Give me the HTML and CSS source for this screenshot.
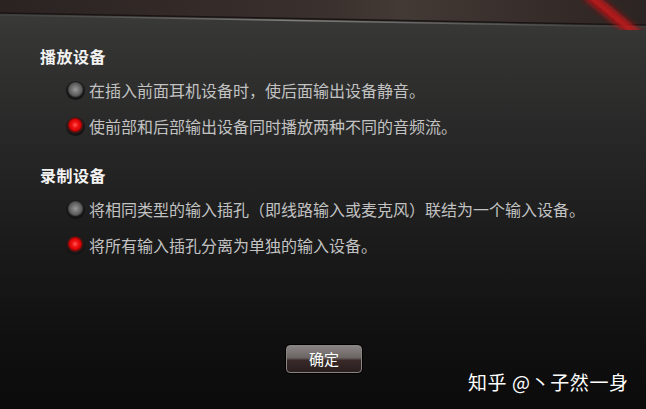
FILE: index.html
```html
<!DOCTYPE html>
<html lang="zh-CN">
<head>
  <meta charset="UTF-8">
  <meta name="viewport" content="width=device-width, initial-scale=1.0">
  <title>高级设备设置</title>
  <link rel="stylesheet" href="styles.css">
</head>
<body>
  <div class="window">
    <!-- top frame edge with the red accent stripe -->
    <svg class="frame-top" width="646" height="30" viewBox="0 0 646 30">
      <defs>
        <linearGradient id="band" x1="0" y1="0" x2="1" y2="0">
          <stop offset="0" stop-color="#2a2321"/>
          <stop offset="0.5" stop-color="#3a302d"/>
          <stop offset="0.62" stop-color="#433935"/>
          <stop offset="1" stop-color="#2c2422"/>
        </linearGradient>
        <linearGradient id="shine" x1="0" y1="0" x2="1" y2="0">
          <stop offset="0" stop-color="#5a5a58" stop-opacity="0.2"/>
          <stop offset="0.45" stop-color="#8a8884" stop-opacity="0.9"/>
          <stop offset="0.8" stop-color="#6a6866" stop-opacity="0.6"/>
          <stop offset="1" stop-color="#555" stop-opacity="0.2"/>
        </linearGradient>
        <filter id="soft"><feGaussianBlur stdDeviation="3"/></filter>
      </defs>
      <polygon points="0,0 646,0 646,25 0,13" fill="url(#band)"/>
      <line x1="0" y1="13" x2="646" y2="25" stroke="#1a1514" stroke-width="1.5"/>
      <line x1="0" y1="15" x2="646" y2="27" stroke="url(#shine)" stroke-width="1.5"/>
      <line x1="586" y1="-6" x2="652" y2="48" stroke="#b01218" stroke-width="9" filter="url(#soft)"/>
      <line x1="590" y1="-6" x2="652" y2="46" stroke="#d81c22" stroke-width="3" filter="url(#soft)"/>
    </svg>

    <div class="content">
      <section class="group">
        <h2 class="group-title">播放设备</h2>
        <label class="option">
          <span class="radio"></span>
          <span class="option-text">在插入前面耳机设备时，使后面输出设备静音。</span>
        </label>
        <label class="option">
          <span class="radio checked"></span>
          <span class="option-text">使前部和后部输出设备同时播放两种不同的音频流。</span>
        </label>
      </section>

      <section class="group">
        <h2 class="group-title">录制设备</h2>
        <label class="option">
          <span class="radio"></span>
          <span class="option-text">将相同类型的输入插孔（即线路输入或麦克风）联结为一个输入设备。</span>
        </label>
        <label class="option">
          <span class="radio checked"></span>
          <span class="option-text">将所有输入插孔分离为单独的输入设备。</span>
        </label>
      </section>

      <div class="actions">
        <button type="button" class="btn-ok">确定</button>
      </div>
    </div>

    <div class="watermark">知乎 @丶子然一身</div>
  </div>
</body>
</html>
```

FILE: styles.css
```css
body {
  margin: 0;
  padding: 0;
  background: #0c0c0c;
  font-family: "Noto Sans CJK SC", "Noto Sans", sans-serif;
}
.window {
  position: relative;
  width: 646px;
  height: 409px;
  overflow: hidden;
  background: linear-gradient(to bottom, #3d3d3b 0px, #343433 40px, #262626 150px, #1a1a1a 250px, #101010 340px, #0b0b0b 409px);
}
.frame-top {
  display: block;
}
.content {
  padding: 14px 0 0 40px;
}
.group {
  margin-bottom: 25px;
}
.group-title {
  margin: 0 0 10px;
  font-size: 16px;
  line-height: 24px;
  font-weight: bold;
  color: #f2f2f2;
  letter-spacing: 0.5px;
}
.option {
  display: flex;
  align-items: center;
  height: 24px;
  margin-bottom: 12px;
  padding-left: 26px;
  cursor: pointer;
}
.option:last-child {
  margin-bottom: 0;
}
.radio {
  flex: none;
  width: 19px;
  height: 19px;
  border-radius: 50%;
  box-sizing: border-box;
  background: radial-gradient(circle at 50% 45%, #9a9a9a 0, #7a7a7a 3px, #5e5e5e 6px, #444 7px, #1c1c1c 8px, #121212 9.5px);
}
.radio.checked {
  background: radial-gradient(circle at 48% 42%, #ff5a5a 0, #f01414 3px, #d80404 5.5px, #8a0808 6.5px, #2a1a1a 8px, #151313 9.5px);
}
.option-text {
  margin-left: 4px;
  font-size: 16px;
  color: #c2c2c2;
  white-space: nowrap;
}
.actions {
  display: flex;
  justify-content: center;
  margin-top: 88px;
  padding-right: 38px;
}
.btn-ok {
  width: 76px;
  height: 28px;
  padding: 0;
  border: 1px solid #8a8583;
  border-radius: 4px;
  background: linear-gradient(to bottom, #8a8583 0, #6a6462 45%, #3a2a2a 55%, #2a1e1e 100%);
  box-shadow: 0 0 0 1px #000;
  color: #fff;
  font-family: "Noto Sans CJK SC", sans-serif;
  font-size: 15px;
  line-height: 26px;
  cursor: pointer;
}
.watermark {
  position: absolute;
  left: 468px;
  top: 368px;
  font-size: 19px;
  line-height: 28px;
  color: #ffffff;
  letter-spacing: 0.6px;
}
```
